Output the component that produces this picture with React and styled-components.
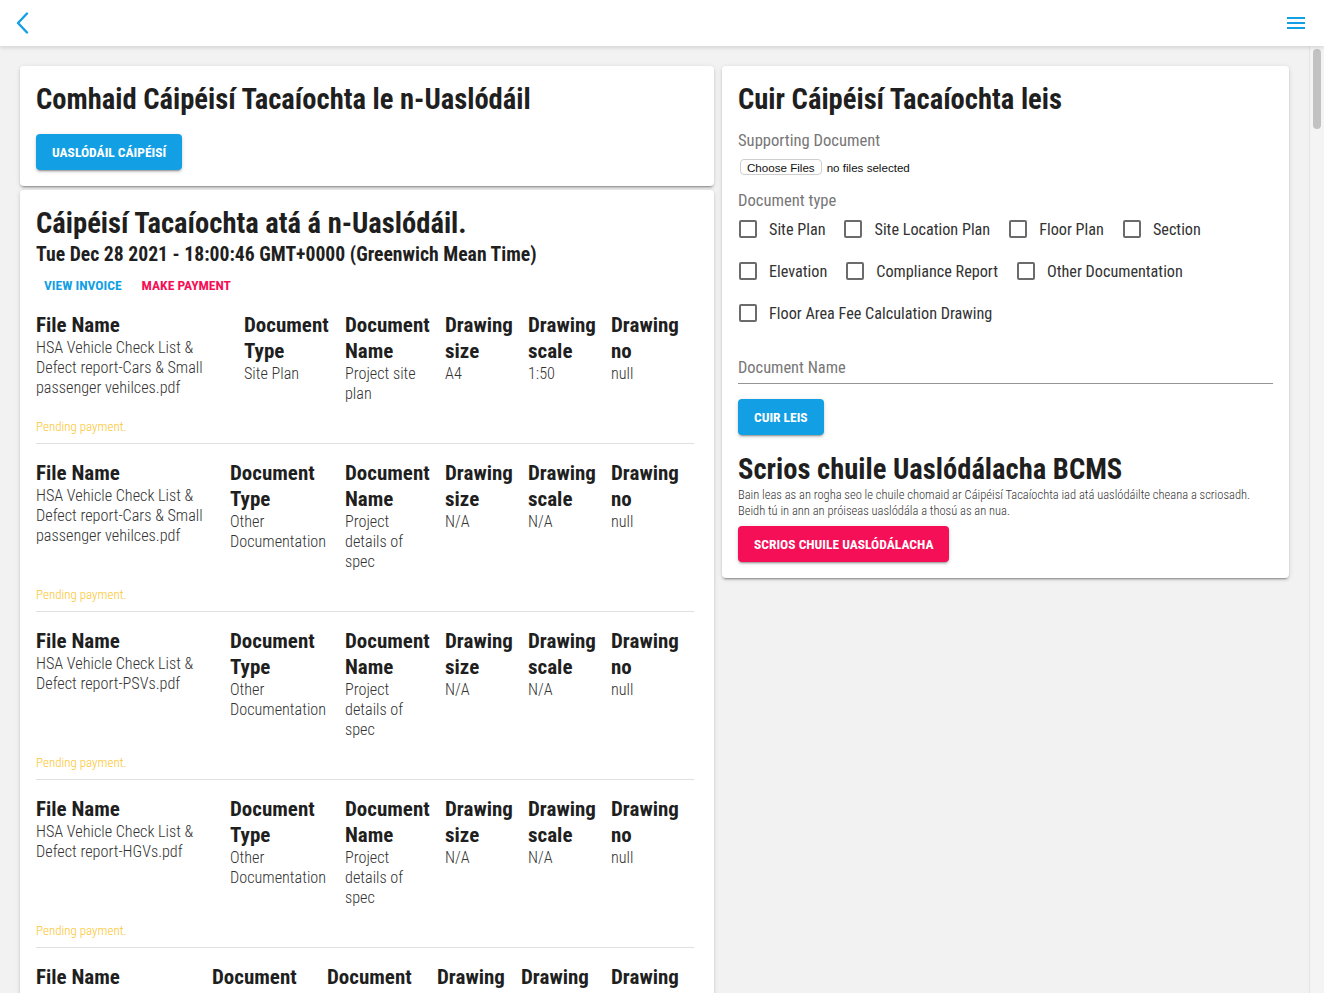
import React from 'react';
import styled, { createGlobalStyle } from 'styled-components';

const Global = createGlobalStyle`
  html, body { margin: 0; height: 100%; }
  body {
    font-family: "Roboto Condensed", "Liberation Sans Narrow", sans-serif;
    color: #212121;
    background: #f2f2f2;
  }
  * { box-sizing: border-box; }
`;

const BLUE = '#139fe3';
const PINK = '#f50f57';

const Page = styled.div`
  height: 100vh;
  display: flex;
  flex-direction: column;
`;

const TopBar = styled.header`
  flex: none;
  height: 46px;
  background: #fff;
  display: flex;
  align-items: center;
  justify-content: space-between;
  padding: 0 19px 0 15px;
  box-shadow: 0 2px 4px rgba(0, 0, 0, 0.12);
  position: relative;
  z-index: 2;
`;

const IconButton = styled.button`
  background: none;
  border: none;
  padding: 0;
  display: flex;
  cursor: pointer;
`;

const Body = styled.div`
  flex: 1;
  min-height: 0;
  display: flex;
`;

const Main = styled.main`
  flex: 1;
  min-width: 0;
  overflow-y: auto;
  padding: 20px;
  scrollbar-width: none;
  &::-webkit-scrollbar { display: none; }
`;

/* the window's scroll rail, drawn so the page keeps its look */
const ScrollRail = styled.div`
  flex: none;
  width: 15px;
  background: #f4f4f4;
  border-left: 1px solid #e4e4e4;
  padding: 3px 3px 0 3px;
`;

const ScrollThumb = styled.div`
  width: 8px;
  height: 80px;
  border-radius: 4px;
  background: #c2c2c2;
`;

const Columns = styled.div`
  display: grid;
  grid-template-columns: 694fr 567fr;
  gap: 8px;
  align-items: start;
`;

const Stack = styled.div`
  display: flex;
  flex-direction: column;
  gap: 4px;
`;

const Card = styled.section`
  background: #fff;
  border-radius: 4px;
  padding: 16px ${p => p.$right || 16}px ${p => p.$bottom || 16}px 16px;
  box-shadow: 0 3px 1px -2px rgba(0, 0, 0, 0.2), 0 2px 2px 0 rgba(0, 0, 0, 0.14), 0 1px 5px 0 rgba(0, 0, 0, 0.12);
`;

const Title = styled.h2`
  margin: ${p => p.$top || 0}px 0 0;
  font-size: 28.6px;
  line-height: 34px;
  font-weight: 700;
  color: #1f1f1f;
`;

const DateLine = styled.h3`
  margin: 3px 0 0;
  font-size: 19.7px;
  line-height: 24px;
  font-weight: 700;
  color: #1f1f1f;
`;

const Button = styled.button`
  display: block;
  height: 36px;
  padding: 0 16px;
  margin-top: ${p => p.$top || 0}px;
  border: none;
  border-radius: 4px;
  background: ${p => p.$color || BLUE};
  color: #fff;
  font-family: inherit;
  font-size: 13.5px;
  font-weight: 700;
  text-transform: uppercase;
  cursor: pointer;
  box-shadow: 0 3px 1px -2px rgba(0, 0, 0, 0.2), 0 2px 2px 0 rgba(0, 0, 0, 0.14), 0 1px 5px 0 rgba(0, 0, 0, 0.12);
`;

const LinkBar = styled.div`
  display: flex;
  gap: 4px;
`;

const TextButton = styled.button`
  height: 36px;
  padding: 0 8px;
  border: none;
  background: none;
  color: ${p => p.$color};
  font-family: inherit;
  font-size: 13.6px;
  font-weight: 700;
  text-transform: uppercase;
  cursor: pointer;
`;

const Rows = styled.div`
  display: flex;
  flex-direction: column;
`;

const Row = styled.div`
  padding-top: 16px;
  border-bottom: 1px solid #e0e0e0;

  &:first-child { padding-top: 9px; }
`;

const Cells = styled.div`
  display: grid;
  grid-template-columns: ${p => p.$cols};
`;

const Cell = styled.div`
  padding-right: 16px;
  &:last-child { padding-right: 0; }
`;

const Head = styled.div`
  font-size: 21px;
  line-height: 26px;
  font-weight: 700;
  color: #1f1f1f;
`;

const Value = styled.div`
  font-size: 16.2px;
  line-height: 20px;
  font-weight: 300;
  color: #333;
`;

const Pending = styled.div`
  margin: 15px 0 8px;
  font-size: 13px;
  line-height: 16px;
  font-weight: 300;
  color: #fbc52c;
`;

const Label = styled.div`
  margin-top: ${p => p.$top || 0}px;
  font-size: 16.6px;
  line-height: 19px;
  color: #777;
`;

const FileRow = styled.div`
  display: flex;
  align-items: center;
  gap: 5px;
  margin-top: 9px;
  padding-left: 2px;
  font-family: "Liberation Sans", Arial, sans-serif;
  font-size: 11.6px;
  color: #111;
`;

const FileButton = styled.button`
  height: 16px;
  padding: 0 6px;
  border: 1px solid #cfcfcf;
  border-radius: 4px;
  background: #fff;
  font-family: inherit;
  font-size: 11.6px;
  color: #111;
`;

const CheckGroup = styled.div`
  display: flex;
  flex-wrap: wrap;
  margin-top: -2px;
`;

const CheckItem = styled.label`
  height: 42px;
  display: flex;
  align-items: center;
  margin-right: 18px;
  font-size: 16.2px;
  color: #333;
  cursor: pointer;
`;

const Box = styled.span`
  width: 18px;
  height: 18px;
  margin: 0 12px 0 1px;
  border: 2px solid #6b6b6b;
  border-radius: 2px;
`;

const Input = styled.input`
  display: block;
  width: 100%;
  margin-top: 17px;
  padding: 7px 0 6px;
  border: none;
  border-bottom: 1px solid #949494;
  background: transparent;
  font-family: inherit;
  font-size: 16.4px;
  line-height: 19px;
  color: #212121;
  outline: none;

  &::placeholder { color: #777; }
`;

const Note = styled.p`
  margin: 1px 0 0;
  font-size: 12.5px;
  line-height: 16px;
  font-weight: 300;
  color: #333;
`;

const BackIcon = () => (
  <svg width="14" height="22" viewBox="0 0 14 22">
    <polyline points="12,1.5 3,11 12,20.5" fill="none" stroke={BLUE} strokeWidth="2.4" strokeLinecap="round" strokeLinejoin="round" />
  </svg>
);

const MenuIcon = () => (
  <svg width="18" height="12" viewBox="0 0 18 12">
    <rect y="0" width="18" height="2" fill={BLUE} />
    <rect y="5" width="18" height="2" fill={BLUE} />
    <rect y="10" width="18" height="2" fill={BLUE} />
  </svg>
);

const WIDE = '208px 101px 100px 83px 83px 1fr';
const MID = '194px 115px 100px 83px 83px 1fr';
const LATE = '176px 115px 110px 84px 90px 1fr';

const baseRows = [
  { cols: WIDE, file: 'HSA Vehicle Check List & Defect report-Cars & Small passenger vehilces.pdf', type: 'Site Plan', name: 'Project site plan', size: 'A4', scale: '1:50' },
  { cols: MID, file: 'HSA Vehicle Check List & Defect report-Cars & Small passenger vehilces.pdf', type: 'Other Documentation', name: 'Project details of spec', size: 'N/A', scale: 'N/A' },
  { cols: MID, file: 'HSA Vehicle Check List & Defect report-PSVs.pdf', type: 'Other Documentation', name: 'Project details of spec', size: 'N/A', scale: 'N/A' },
  { cols: MID, file: 'HSA Vehicle Check List & Defect report-HGVs.pdf', type: 'Other Documentation', name: 'Project details of spec', size: 'N/A', scale: 'N/A' },
];

// tá go leor uaslódálacha sa liosta, mar sin líontar an chuid eile
const rows = [
  ...baseRows,
  ...Array.from({ length: 62 }, (_, i) => ({ ...baseRows[(i % 3) + 1], cols: LATE })),
];

const docTypes = [
  'Site Plan', 'Site Location Plan', 'Floor Plan', 'Section',
  'Elevation', 'Compliance Report', 'Other Documentation',
  'Floor Area Fee Calculation Drawing',
];

function UploadRow({ row }) {
  const cells = [
    ['File Name', row.file],
    ['Document Type', row.type],
    ['Document Name', row.name],
    ['Drawing size', row.size],
    ['Drawing scale', row.scale],
    ['Drawing no', 'null'],
  ];
  return (
    <Row>
      <Cells $cols={row.cols}>
        {cells.map(([head, value]) => (
          <Cell key={head}>
            <Head>{head}</Head>
            <Value>{value}</Value>
          </Cell>
        ))}
      </Cells>
      <Pending>Pending payment.</Pending>
    </Row>
  );
}

export default function App() {
  return (
    <Page>
      <Global />
      <TopBar>
        <IconButton aria-label="back"><BackIcon /></IconButton>
        <IconButton aria-label="menu"><MenuIcon /></IconButton>
      </TopBar>
      <Body>
        <Main>
          <Columns>
            <Stack>
              <Card>
                <Title>Comhaid Cáipéisí Tacaíochta le n-Uaslódáil</Title>
                <Button $top={18}>Uaslódáil Cáipéisí</Button>
              </Card>
              <Card $right={20}>
                <Title>Cáipéisí Tacaíochta atá á n-Uaslódáil.</Title>
                <DateLine>Tue Dec 28 2021 - 18:00:46 GMT+0000 (Greenwich Mean Time)</DateLine>
                <LinkBar>
                  <TextButton $color={BLUE}>View Invoice</TextButton>
                  <TextButton $color={PINK}>Make Payment</TextButton>
                </LinkBar>
                <Rows>
                  {rows.map((row, i) => <UploadRow key={i} row={row} />)}
                </Rows>
              </Card>
            </Stack>
            <Card $bottom={16}>
              <Title>Cuir Cáipéisí Tacaíochta leis</Title>
              <Label $top={15}>Supporting Document</Label>
              <FileRow>
                <FileButton>Choose Files</FileButton>
                <span>no files selected</span>
              </FileRow>
              <Label $top={16}>Document type</Label>
              <CheckGroup>
                {docTypes.map(t => (
                  <CheckItem key={t}><Box />{t}</CheckItem>
                ))}
              </CheckGroup>
              <Input placeholder="Document Name" />
              <Button $top={15}>Cuir leis</Button>
              <Title $top={17}>Scrios chuile Uaslódálacha BCMS</Title>
              <Note>
                Bain leas as an rogha seo le chuile chomaid ar Cáipéisí Tacaíochta iad atá uaslódáilte cheana a scriosadh.<br />
                Beidh tú in ann an próiseas uaslódála a thosú as an nua.
              </Note>
              <Button $top={7} $color={PINK}>Scrios chuile Uaslódálacha</Button>
            </Card>
          </Columns>
        </Main>
        <ScrollRail>
          <ScrollThumb />
        </ScrollRail>
      </Body>
    </Page>
  );
}
